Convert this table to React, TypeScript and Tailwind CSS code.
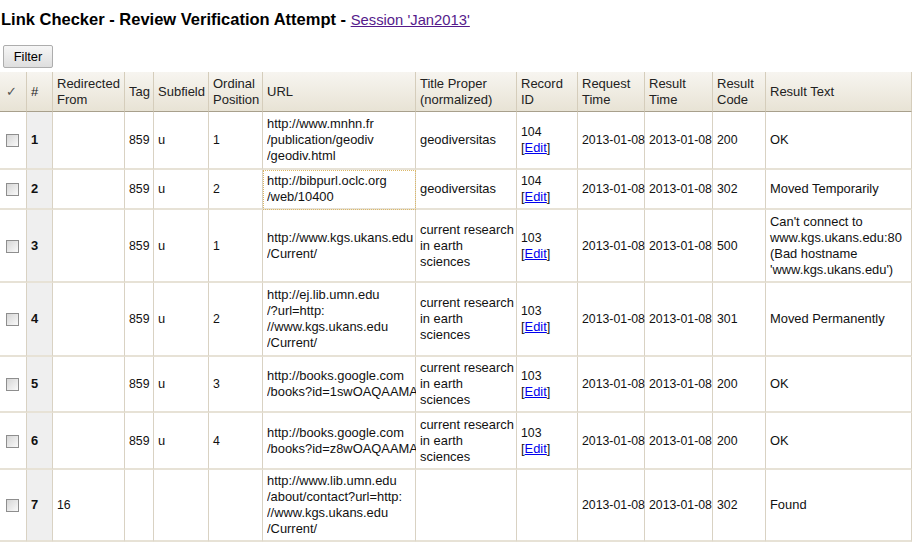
import React from "react";

type Row = {
  n: number;
  redirected?: string;
  tag?: string;
  subfield?: string;
  ordinal?: string;
  url: string[];
  title?: string[];
  record?: string;
  result: string;
  text: string[];
  h: string;
  focus?: boolean;
};

const research = ["current research", "in earth", "sciences"];

const rows: Row[] = [
  { n: 1, tag: "859", subfield: "u", ordinal: "1", url: ["http://www.mnhn.fr", "/publication/geodiv", "/geodiv.html"], title: ["geodiversitas"], record: "104", result: "200", text: ["OK"], h: "h-[58px]" },
  { n: 2, tag: "859", subfield: "u", ordinal: "2", url: ["http://bibpurl.oclc.org", "/web/10400"], title: ["geodiversitas"], record: "104", result: "302", text: ["Moved Temporarily"], h: "h-[40px]", focus: true },
  { n: 3, tag: "859", subfield: "u", ordinal: "1", url: ["http://www.kgs.ukans.edu", "/Current/"], title: research, record: "103", result: "500", text: ["Can't connect to", "www.kgs.ukans.edu:80", "(Bad hostname", "'www.kgs.ukans.edu')"], h: "h-[73px]" },
  { n: 4, tag: "859", subfield: "u", ordinal: "2", url: ["http://ej.lib.umn.edu", "/?url=http:", "//www.kgs.ukans.edu", "/Current/"], title: research, record: "103", result: "301", text: ["Moved Permanently"], h: "h-[74px]" },
  { n: 5, tag: "859", subfield: "u", ordinal: "3", url: ["http://books.google.com", "/books?id=1swOAQAAMAAJ"], title: research, record: "103", result: "200", text: ["OK"], h: "h-[56px]" },
  { n: 6, tag: "859", subfield: "u", ordinal: "4", url: ["http://books.google.com", "/books?id=z8wOAQAAMAAJ"], title: research, record: "103", result: "200", text: ["OK"], h: "h-[57px]" },
  { n: 7, redirected: "16", url: ["http://www.lib.umn.edu", "/about/contact?url=http:", "//www.kgs.ukans.edu", "/Current/"], result: "302", text: ["Found"], h: "h-[72px]" },
];

const headers: { label: string[]; w: string }[] = [
  { label: ["\u2713"], w: "w-[27px]" },
  { label: ["#"], w: "w-[26px]" },
  { label: ["Redirected", "From"], w: "w-[72px]" },
  { label: ["Tag"], w: "w-[29px]" },
  { label: ["Subfield"], w: "w-[55px]" },
  { label: ["Ordinal", "Position"], w: "w-[54px]" },
  { label: ["URL"], w: "w-[153px]" },
  { label: ["Title Proper", "(normalized)"], w: "w-[101px]" },
  { label: ["Record", "ID"], w: "w-[61px]" },
  { label: ["Request", "Time"], w: "w-[67px]" },
  { label: ["Result", "Time"], w: "w-[68px]" },
  { label: ["Result", "Code"], w: "w-[53px]" },
  { label: ["Result Text"], w: "w-[146px]" },
];

const Lines = ({ lines }: { lines?: string[] }) => (
  <>
    {lines?.map((l, i) => (
      <div key={i} className="whitespace-nowrap">
        {l}
      </div>
    ))}
  </>
);

const td = "border-r border-b-2 border-r-[#d9d2c3] border-b-[#e7e2d6] px-[4px] py-0 align-middle";
const num = "text-[12.3px]";

const Checkbox = () => (
  <span className="inline-block w-[13px] h-[13px] border border-[#8e8e8e] bg-gradient-to-br from-[#d6d6d6] to-[#fafafa] align-middle" />
);

const App = () => {
  return (
    <div className="w-[914px] h-[542px] overflow-hidden bg-white text-[12.9px] leading-[16px] text-[#111] font-['Liberation_Sans',Arial,sans-serif]">
      <div className="pt-[10px] pl-px h-[45px]">
        <span className="text-[16.5px] leading-[19px] font-bold text-black">
          Link Checker - Review Verification Attempt -{" "}
        </span>
        <a href="#" className="text-[14.8px] leading-[19px] text-[#551a8b] underline">
          Session 'Jan2013'
        </a>
      </div>
      <div className="pl-[3px] h-[27px]">
        <button className="h-[23px] w-[50px] border border-[#adadad] rounded-[2px] bg-gradient-to-b from-[#f6f6f6] to-[#dedede] text-[12.9px] text-black">
          Filter
        </button>
      </div>
      <table className="table-fixed border-separate border-spacing-0 w-[912px]">
        <thead>
          <tr className="h-[40px]">
            {headers.map((h, i) => (
              <th
                key={i}
                className={`${h.w} text-left font-normal align-middle px-[4px] text-[13px] border-r border-r-[#d5cdbb] border-b border-b-[#a8a08c] bg-gradient-to-b from-[#f7f5f0] to-[#e8e3d5] ${i === 0 ? "pl-[6px] text-[#555]" : "text-[#222]"} ${i === headers.length - 1 ? "border-r-[#b9b2a2]" : ""}`}
              >
                <Lines lines={h.label} />
              </th>
            ))}
          </tr>
        </thead>
        <tbody>
          {rows.map((r) => (
            <tr key={r.n} className={r.h}>
              <td className={`${td} pl-[6px]`}>
                <Checkbox />
              </td>
              <td className={`${td} bg-[#efefef] font-bold`}>{r.n}</td>
              <td className={`${td} ${num}`}>{r.redirected}</td>
              <td className={`${td} ${num}`}>{r.tag}</td>
              <td className={td}>{r.subfield}</td>
              <td className={`${td} ${num}`}>{r.ordinal}</td>
              <td className={`${td} ${r.focus ? "outline-1 outline-dotted outline-[#dcb869] -outline-offset-1" : ""}`}>
                <div className="w-[149px] overflow-hidden">
                  <Lines lines={r.url} />
                </div>
              </td>
              <td className={td}>
                <Lines lines={r.title} />
              </td>
              <td className={td}>
                {r.record && (
                  <>
                    <div className={num}>{r.record}</div>
                    <div>
                      [<a href="#" className="text-[#0000ee] underline">Edit</a>]
                    </div>
                  </>
                )}
              </td>
              <td className={`${td} ${num} whitespace-nowrap`}>2013-01-08</td>
              <td className={`${td} ${num} whitespace-nowrap`}>2013-01-08</td>
              <td className={`${td} ${num}`}>{r.result}</td>
              <td className={`${td} border-r-[#b9b2a2]`}>
                <Lines lines={r.text} />
              </td>
            </tr>
          ))}
        </tbody>
      </table>
    </div>
  );
};

export default App;
